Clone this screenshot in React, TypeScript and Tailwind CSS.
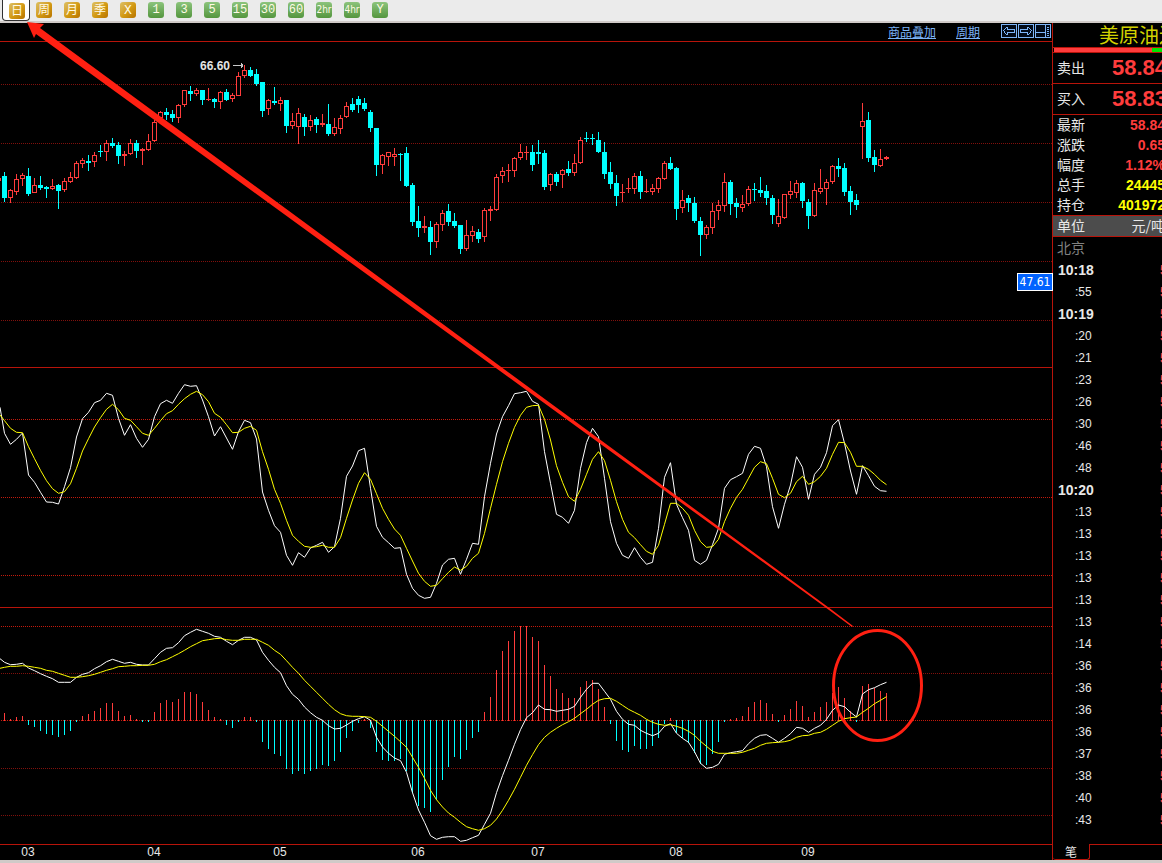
import React from "react";

type Candle = [number, number, number, number, 0 | 1];

// high, body top, body bottom, low, 1 = rising
const CANDLES: Candle[] = [
  [172,176,198,202,0],[189,190,198,203,1],[174,179,192,195,1],[173,175,179,186,1],[168,176,194,196,0],
  [178,185,193,193,1],[176,185,188,190,0],[186,187,189,198,0],[179,186,189,190,1],[184,185,191,209,0],
  [178,181,190,192,1],[172,177,182,183,1],[161,163,178,179,1],[158,160,164,168,1],[155,161,163,171,0],
  [152,155,162,167,1],[145,151,152,157,0],[140,143,152,161,1],[138,143,146,148,0],[142,145,156,164,0],
  [151,154,156,166,1],[139,143,154,155,1],[140,143,151,158,0],[148,149,151,165,1],[134,141,150,151,1],
  [120,122,141,142,1],[111,112,118,118,1],[108,112,115,120,0],[110,114,118,122,0],[104,105,118,123,1],
  [90,90,105,107,1],[86,91,94,101,0],[88,90,94,96,1],[90,90,100,105,0],[88,99,100,101,1],
  [98,99,102,108,0],[91,92,102,109,1],[89,92,100,101,0],[93,95,99,102,1],[72,76,96,96,1],
  [65,70,76,78,1],[67,70,76,77,0],[69,74,84,86,0],[82,82,111,117,0],[99,100,109,115,1],
  [87,101,103,105,0],[97,100,104,111,1],[100,100,126,133,0],[113,121,126,129,1],[108,113,127,144,1],
  [114,117,127,136,0],[115,120,127,131,1],[117,119,125,133,0],[114,123,125,127,1],[104,124,134,136,0],
  [118,127,134,136,1],[115,118,129,134,1],[102,106,117,118,1],[98,104,110,112,0],[96,99,105,113,0],
  [98,103,109,111,0],[110,112,128,132,0],[128,128,165,176,0],[154,155,165,174,1],[152,152,157,166,1],
  [148,154,157,166,1],[153,154,155,181,0],[147,153,186,187,0],[183,185,222,226,0],[206,221,228,237,0],
  [216,226,228,233,1],[221,227,242,255,0],[222,224,242,248,1],[210,213,225,231,1],[204,211,222,226,0],
  [213,221,226,228,0],[225,225,249,254,0],[220,235,249,251,1],[226,231,236,242,1],[229,232,239,243,0],
  [208,210,237,242,1],[206,209,211,221,1],[174,177,210,211,1],[167,171,176,183,1],[164,170,171,182,1],
  [157,158,171,177,1],[144,152,158,160,1],[146,152,153,160,1],[145,152,165,171,0],[140,152,154,164,0],
  [150,153,187,190,0],[173,174,185,191,1],[172,174,182,186,0],[169,170,175,188,1],[161,169,173,176,0],
  [154,163,173,176,1],[137,140,163,164,1],[132,138,139,142,0],[134,138,139,145,0],[132,140,152,153,0],
  [142,152,174,179,0],[162,172,184,189,0],[175,183,196,206,0],[184,192,193,202,1],[178,188,189,193,1],
  [173,176,189,194,1],[171,176,192,199,0],[179,191,192,193,1],[184,188,192,195,1],[177,178,189,193,1],
  [161,163,179,180,1],[157,163,169,170,0],[167,168,209,220,0],[190,200,208,213,1],[195,198,203,212,0],
  [197,203,221,223,0],[217,221,235,256,0],[225,227,235,239,1],[203,211,228,234,1],[200,205,211,220,1],
  [173,182,206,212,1],[180,182,204,215,0],[198,203,207,218,0],[195,204,208,212,1],[186,189,204,206,1],
  [183,189,190,201,0],[177,190,193,197,0],[185,191,198,205,0],[195,198,215,224,0],[199,216,224,227,1],
  [194,194,218,219,1],[181,191,195,199,1],[180,183,193,198,1],[182,183,201,208,0],[199,202,216,229,0],
  [183,190,216,217,1],[169,188,192,194,1],[179,182,189,205,1],[165,166,182,184,1],[158,166,169,177,0],
  [163,168,192,196,0],[186,191,202,215,0],[194,200,205,210,0],[103,121,127,159,1],[112,120,158,162,0],
  [150,157,165,172,0],[149,159,166,167,1],[156,157,159,160,1],
];

// Indicator series: thirds of a pixel, first value sits on the left edge.
const K_LINE = [
  127,205,238,223,204,330,352,382,411,412,417,365,308,216,161,142,113,106,85,91,160,211,179,220,247,223,155,116,106,115,85,59,64,62,
  105,155,213,185,219,253,200,166,173,222,381,436,482,502,571,601,563,577,549,541,532,562,545,460,334,303,257,250,370,484,517,533,550,
  548,628,670,691,700,697,655,600,583,580,628,583,535,538,395,295,207,155,122,86,83,79,109,118,260,355,448,457,475,436,310,233,190,215,
  340,470,535,571,580,548,577,598,592,490,337,293,418,458,496,586,598,586,539,490,370,344,335,325,268,244,250,305,425,490,418,360,275,
  307,403,328,307,263,182,164,235,318,388,302,332,364,377,379,
];
const D_LINE = [
  150,167,190,202,203,245,281,316,347,371,385,380,356,310,258,221,186,158,133,118,134,160,166,185,205,211,190,167,146,137,118,101,88,
  79,89,110,145,157,179,203,202,190,184,196,260,313,373,415,466,511,529,544,547,545,541,547,547,518,460,405,355,323,343,386,430,463,492,
  511,550,588,625,649,664,661,641,622,606,616,604,580,565,505,430,358,290,235,187,151,127,122,121,163,225,302,352,395,409,373,328,283,
  260,287,346,410,463,502,518,539,559,568,541,478,415,415,430,451,496,530,547,545,523,470,430,397,373,340,307,290,296,340,388,398,385,
  350,334,358,350,334,310,268,232,233,262,304,304,313,328,346,359,
];
const DIF_LINE = [
  146,157,164,163,160,174,182,191,199,206,217,217,217,202,193,188,176,167,155,148,154,160,157,163,165,165,146,127,115,113,98,77,67,58,
  64,70,79,82,94,104,91,82,82,90,127,151,172,188,227,253,268,291,308,322,331,347,357,355,345,334,326,320,331,382,411,430,444,452,487,
  548,600,637,677,688,682,680,680,694,691,683,676,643,610,548,497,451,403,359,323,308,285,298,299,304,301,298,289,262,238,220,220,244,
  268,304,328,343,346,361,370,377,370,349,341,370,385,397,425,460,475,472,463,433,428,425,422,401,385,376,374,385,397,385,371,352,355,
  367,355,346,328,301,285,290,307,321,252,239,233,224,217,
];
const DEA_LINE = [
  175,172,169,169,167,169,172,175,181,184,190,196,202,202,200,197,193,187,181,176,170,169,167,167,166,166,163,155,149,140,131,121,110,
  101,92,89,86,85,89,91,91,88,88,88,97,106,121,133,152,172,190,211,229,247,265,283,299,311,317,319,319,320,322,334,349,364,379,395,412,
  442,472,505,541,569,591,609,622,637,650,656,661,656,646,627,601,571,538,502,466,434,404,382,367,355,344,335,325,311,298,283,271,266,
  265,274,286,298,307,316,328,337,343,346,344,349,355,364,376,394,409,424,430,430,430,430,427,421,415,406,400,398,397,395,391,382,377,
  376,370,367,358,346,334,326,323,321,307,295,281,271,260,
];
const HISTOGRAM = [
  310,327,321,319,345,350,362,371,375,381,375,362,335,318,312,303,294,279,279,303,318,315,327,335,334,306,279,270,276,267,246,246,252,
  276,300,321,327,345,354,335,321,321,335,396,417,432,438,477,492,483,492,483,477,465,468,453,426,384,362,338,328,354,426,450,453,453,
  447,483,550,587,594,606,570,510,471,441,447,420,384,366,306,261,180,123,93,63,48,48,81,93,165,198,237,249,264,264,231,213,210,237,291,
  342,393,420,426,408,417,417,408,384,342,324,370,385,399,429,462,465,432,396,334,327,324,318,291,276,270,279,312,334,315,297,273,288,
  321,306,291,276,250,231,264,304,334,228,222,234,243,249,
];

const toPoints = (series: number[], top: number) =>
  series.map((v, i) => `${i === 0 ? 0 : 6 * i - 1.5},${(v / 3 + top).toFixed(1)}`).join(" ");

function Grid({ y, strong = false }: { y: number; strong?: boolean }) {
  return (
    <line x1="1" x2="100%" y1={y + 0.5} y2={y + 0.5} stroke={strong ? "#c41a0c" : "#80100c"} strokeDasharray="1 1" shapeRendering="crispEdges" />
  );
}

function Series({ points, color }: { points: string; color: string }) {
  return <polyline points={points} fill="none" stroke={color} strokeWidth="1" />;
}

function PricePanel() {
  return (
    <div className="relative border-b border-[#b8140a]">
      <svg className="block h-[325px] w-full" role="img" aria-label="K线">
        <g transform="translate(0 -42)">
          {[84, 143, 202, 261, 320].map((y) => (
            <Grid key={y} y={y} />
          ))}
          <g shapeRendering="crispEdges">
            <rect x="0" y="178" width="1" height="3" fill="#ff3c3c" />
            {CANDLES.map(([high, top, bottom, low, up], i) => {
              const x = 4 + i * 6;
              const color = up ? "#ff3c3c" : "#00ffff";
              return (
                <g key={i}>
                  <rect x={x} y={high} width="1" height={low - high} fill={color} />
                  <rect x={x - 2} y={top} width="5" height={bottom - top} fill={color} />
                  {up === 1 && bottom - top > 2 && (
                    <rect x={x - 1} y={top + 1} width="3" height={bottom - top - 2} fill="#000" />
                  )}
                </g>
              );
            })}
          </g>
          <text x="200" y="70" fill="#e4e4e4" className="font-['Liberation_Sans',sans-serif] text-[12px] font-bold">66.60</text>
          <path d="M233 65.5H243M241.5 63V68M242.5 64V67" fill="none" stroke="#c8c8c8" />
        </g>
      </svg>
      <span className="absolute right-[-1px] top-[231px] flex h-[18px] w-[36px] items-center justify-center border border-white bg-[#0062ff] font-['DejaVu_Sans_Condensed','DejaVu_Sans',sans-serif] text-[12px] leading-none text-white">
        47.61
      </span>
    </div>
  );
}

function KdjPanel() {
  return (
    <svg className="box-content block h-[239px] w-full border-b border-[#b8140a]" role="img" aria-label="KDJ">
      <g transform="translate(0 -368)">
        {[419, 497, 575].map((y) => (
          <Grid key={y} y={y} strong />
        ))}
        <Series points={toPoints(K_LINE, 365)} color="#ffffff" />
        <Series points={toPoints(D_LINE, 365)} color="#ffff00" />
      </g>
    </svg>
  );
}

function MacdPanel() {
  return (
    <svg className="box-content block h-[236px] w-full border-b border-[#b8140a]" role="img" aria-label="MACD">
      <g transform="translate(0 -608)">
        <Grid y={626} strong />
        <Grid y={673} />
        <Grid y={720} strong />
        <Grid y={768} />
        <Grid y={815} />
        <g shapeRendering="crispEdges">
          {HISTOGRAM.map((v, i) => {
            const tip = Math.round(v / 3) + 610;
            const up = v < 331;
            return (
              <rect key={i} x={4 + 6 * i} y={up ? tip : 720} width="1" height={up ? 721 - tip : Math.max(tip - 720, 2)} fill={up ? "#ff3c3c" : "#00ffff"} />
            );
          })}
        </g>
        <Series points={toPoints(DIF_LINE, 610)} color="#ffffff" />
        <Series points={toPoints(DEA_LINE, 610)} color="#ffff00" />
      </g>
    </svg>
  );
}

const MONTHS: [string, number][] = [["03", 28], ["04", 154], ["05", 280], ["06", 418], ["07", 538], ["08", 676], ["09", 808]];

function MonthAxis() {
  return (
    <svg className="block h-[15px] w-full" role="img" aria-label="月份">
      {MONTHS.map(([m, x]) => (
        <text key={m} x={x} y="11" textAnchor="middle" fill="#e8e8e8" className="font-['Liberation_Sans',sans-serif] text-[12px]">
          {m}
        </text>
      ))}
    </svg>
  );
}

const PERIODS: { label: string; kind: "long" | "wide" | "small" | "hour" }[] = [
  { label: "日", kind: "long" },
  { label: "周", kind: "long" },
  { label: "月", kind: "long" },
  { label: "季", kind: "long" },
  { label: "X", kind: "wide" },
  { label: "1", kind: "small" },
  { label: "3", kind: "small" },
  { label: "5", kind: "small" },
  { label: "15", kind: "small" },
  { label: "30", kind: "small" },
  { label: "60", kind: "small" },
  { label: "2hr", kind: "hour" },
  { label: "4hr", kind: "hour" },
  { label: "Y", kind: "small" },
];

const KIND_STYLE = {
  long: "bg-linear-to-br from-[#dcc060] via-[#d49c14] to-[#b87400] pb-[3px] font-['Noto_Sans_CJK_SC',sans-serif] text-[12px]",
  wide: "bg-linear-to-br from-[#dcc060] via-[#d49c14] to-[#b87400] font-['Liberation_Mono',monospace] text-[13px]",
  small: "bg-linear-to-b from-[#8cc47c] to-[#54963e] font-['Liberation_Mono',monospace] text-[12px]",
  hour: "bg-linear-to-b from-[#8cc47c] to-[#54963e] font-['Liberation_Sans_Narrow','DejaVu_Sans_Condensed',sans-serif] text-[10px]",
};

function Toolbar() {
  return (
    <nav aria-label="周期" className="flex h-[23px] border-b-2 border-[#d0cac8] bg-[#ebebeb] pl-[2px]">
      {PERIODS.map((p, i) => (
        <button
          key={p.label}
          type="button"
          aria-pressed={i === 0}
          className={
            i === 0
              ? "flex h-[21px] w-[28px] items-end justify-center rounded-b-[4px] border border-t-0 border-[#303030] bg-white pb-[1px] pl-[2px]"
              : "flex h-[21px] w-[28px] items-center justify-center pb-[1px]"
          }
        >
          <span className={`flex h-[16px] w-[16px] items-center justify-center rounded-[3px] leading-none text-[#fffbe6] ${KIND_STYLE[p.kind]}`}>
            {p.label}
          </span>
        </button>
      ))}
    </nav>
  );
}

function IconButton({ label, d }: { label: string; d: string }) {
  return (
    <button type="button" aria-label={label} className="h-[14px] w-[16px]">
      <svg className="block h-[14px] w-[16px]" viewBox="0 0 16 14" shapeRendering="crispEdges">
        <rect x="0.5" y="0.5" width="15" height="13" fill="#020a18" stroke="#7cb4f8" />
        <path d={d} fill="none" stroke="#7cb4f8" />
      </svg>
    </button>
  );
}

function ChartHeader() {
  return (
    <header className="flex h-[19px] items-start justify-end border-b border-[#b8140a] pr-[1px] font-['Noto_Sans_CJK_SC',sans-serif] text-[12px] leading-[18px] text-[#7cb4f8]">
      <a href="#overlay" className="mr-[20px] underline underline-offset-1">商品叠加</a>
      <a href="#period" className="mr-[21px] underline underline-offset-1">周期</a>
      <div className="flex gap-px pt-px">
        <IconButton label="向左" d="M2 6.5H3M3 5.5H4M4 4.5H5M5 3.5H6.5V5M6 5.5H13.5V8.5H6M6.5 9V10.5H5M5 9.5H4M4 8.5H3M3 7.5H4" />
        <IconButton label="向右" d="M14 6.5H13M13 5.5H12M12 4.5H11M11 3.5H9.5V5M10 5.5H2.5V8.5H10M9.5 9V10.5H11M11 9.5H12M12 8.5H13M13 7.5H12" />
        <IconButton label="布局" d="M10.5 1V13M1 8.5H10M12 3.5H14M12 5.5H14M12 7.5H14M12 9.5H14M12 11.5H14" />
      </div>
    </header>
  );
}

const STATS: [string, string, string][] = [
  ["最新", "58.84", "text-[#ff3c3c]"],
  ["涨跌", "0.65", "text-[#ff3c3c]"],
  ["幅度", "1.12%", "text-[#ff3c3c]"],
  ["总手", "24445", "text-[#ffff00]"],
  ["持仓", "401972", "text-[#ffff00]"],
];

const TICKS = [
  "10:18", ":55", "10:19", ":20", ":21", ":23", ":26", ":30", ":46", ":48", "10:20", ":13", ":13",
  ":13", ":13", ":13", ":13", ":14", ":36", ":36", ":36", ":36", ":37", ":38", ":40", ":43",
];

function QuotePanel() {
  return (
    <aside className="flex w-[110px] shrink-0 flex-col overflow-hidden border-l border-[#b8140a] font-['Noto_Sans_CJK_SC',sans-serif] text-[14px] text-[#e8e8e8]">
      <h1 className="h-[24px] whitespace-nowrap pl-[46px] text-[20px] leading-[24px] text-[#d2d200]">美原油连</h1>
      <div className="flex h-[6px] border-y border-[#b8140a]">
        <div className="ml-px w-[98px] bg-[#ff3c3c]" />
        <div className="flex-1 bg-[#00e600]" />
      </div>
      <dl className="w-[114px]">
        {[["卖出", "58.84"], ["买入", "58.83"]].map(([name, value]) => (
          <div key={name} className="flex h-[31px] items-center justify-between border-b border-[#b8140a] pl-[4px]">
            <dt className="pb-[2px]">{name}</dt>
            <dd className="font-['Liberation_Sans',sans-serif] text-[22px] font-bold leading-none text-[#ff3c3c]">{value}</dd>
          </div>
        ))}
        {STATS.map(([name, value, tone]) => (
          <div key={name} className="flex h-[20px] items-center justify-between pl-[4px] pr-[2px] leading-[20px]">
            <dt className="pb-[2px]">{name}</dt>
            <dd className={`font-['Liberation_Sans',sans-serif] font-bold ${tone}`}>{value}</dd>
          </div>
        ))}
        <div className="flex h-[22px] items-center justify-between border-y border-[#b8140a] bg-[#4c4c4c] pb-[2px] pl-[4px] pr-[2px]">
          <dt>单位</dt>
          <dd>元/吨</dd>
        </div>
      </dl>
      <table className="w-[150px] table-fixed border-collapse text-left">
        <colgroup>
          <col className="w-[107px]" />
          <col className="w-[43px]" />
        </colgroup>
        <thead>
          <tr className="h-[22px]">
            <th scope="col" colSpan={2} className="p-0 pb-[2px] pl-[4px] font-normal leading-[20px] text-[#808080]">北京</th>
          </tr>
        </thead>
        <tbody className="font-['Liberation_Sans',sans-serif]">
          {TICKS.map((t, i) => (
            <tr key={i} className="h-[22px]">
              <td className={t.startsWith(":") ? "p-0 pl-[22px] text-[12px] leading-[22px]" : "p-0 pl-[5px] font-bold leading-[22px]"}>{t}</td>
              <td className="p-0 font-bold leading-[22px] text-[#ff3c3c]">58.84</td>
            </tr>
          ))}
        </tbody>
      </table>
      <div className="mt-auto flex h-[16px]">
        <button type="button" className="w-[37px] rounded-b-[3px] border-b border-r border-[#b8140a] text-[12px] leading-[14px]">笔</button>
        <div className="flex-1 border-t border-[#b8140a]" />
      </div>
    </aside>
  );
}

function Annotation() {
  return (
    <svg className="pointer-events-none absolute left-0 top-0 h-full w-full" aria-hidden="true">
      <path d="M27 22L44 24L40 28L832 610L853 626L852 627L829 610L36 34L34 38Z" fill="#ff2012" />
      <ellipse cx="877.5" cy="685.5" rx="44" ry="55" fill="none" stroke="#ff2012" strokeWidth="3" />
    </svg>
  );
}

export default function App() {
  return (
    <div className="relative flex min-h-screen flex-col overflow-hidden border-b-[3px] border-[#d0cac8] bg-black">
      <Toolbar />
      <div className="flex flex-1">
        <main className="min-w-0 flex-1">
          <ChartHeader />
          <PricePanel />
          <KdjPanel />
          <MacdPanel />
          <MonthAxis />
        </main>
        <QuotePanel />
      </div>
      <Annotation />
    </div>
  );
}
